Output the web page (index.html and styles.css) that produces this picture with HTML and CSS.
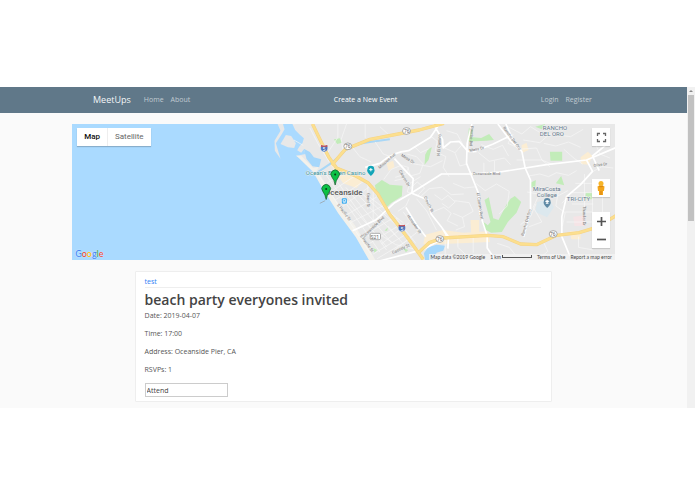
FILE: index.html
```html
<!DOCTYPE html>
<html lang="en">
<head>
<meta charset="utf-8">
<title>MeetUps</title>
<link rel="stylesheet" href="styles.css">
</head>
<body>
<div class="window">
  <div class="page">
    <header class="navbar">
      <nav class="nav-group">
        <a class="brand" href="#">MeetUps</a>
        <a class="nav-link" href="#">Home</a>
        <a class="nav-link" href="#">About</a>
      </nav>
      <a class="nav-link create" href="#">Create a New Event</a>
      <nav class="nav-group">
        <a class="nav-link" href="#">Login</a>
        <a class="nav-link" href="#">Register</a>
      </nav>
    </header>
    <main class="content">
      <section class="map" aria-label="Map of events">
        <svg class="map-canvas" viewBox="0 0 543 136" preserveAspectRatio="xMidYMid slice">
          <g transform="translate(188 -4) scale(.33333)">
            <path class="land" d="M48 0L62 32L44 62L45 92L62 116L48 70L66 42L74 28L66 0ZM92 0L106 30L120 44L132 55L128 69L118 80L112 91L124 98L132 88L137 102L118 106L108 107L132 122L170 162L187 190L215 238L258 300L300 360L350 425H1080V0Z"/>
            <path class="land" d="M62 72L78 45L94 48L108 70L103 84L84 82Z"/>
            <path class="sand" d="M110 107L125 108L160 144L178 140L172 150L190 180L230 244L285 316L350 425H330L288 352L235 280L186 202L160 156Z"/>
            <path class="river" d="M172 158Q195 142 213 130Q236 114 254 93Q280 72 330 66L390 58"/>
            <path class="water" d="M132 86L150 96L162 112L184 118L178 142L158 139L140 117ZM492 400L505 382L530 374L556 377L550 392L530 398L520 420H496Z"/>
            <path class="park" d="M222 58L240 55L247 68L232 72ZM345 196L366 180L390 194L428 197L426 229L394 249L382 260L352 230ZM505 87L516 82L506 120L494 134L496 104ZM627 25L640 30L632 51L664 54L688 42L702 60L680 62L642 64H624ZM674 240L687 232L700 295L716 300L742 250L752 236L765 228L784 246L770 278L744 306L726 336L694 338L674 328L666 302L684 316L692 306ZM870 95H907V122H872ZM888 190L904 168L913 196ZM812 188L828 180L826 204L812 202ZM978 218H996V238H976ZM374 332L384 322L382 332ZM430 384L445 390L438 397ZM826 20L856 12L846 28ZM340 384L352 390L344 398Z"/>
            <path class="campus" d="M832 246L868 238L882 262L862 292L826 276Z"/>
            <path class="zone" d="M212 134L248 150L282 160L306 186L290 204L250 190ZM380 130L400 122L404 141L386 152ZM496 344L550 330L610 338L684 334L690 366L546 372L490 372ZM632 300H658V338H634ZM785 76L800 68L806 90L788 98ZM962 112L984 95L998 108L986 134L964 132ZM930 334H962V358H934Z"/>
            <path class="clinic" d="M940 290L976 286V318H944Z"/>
            <g class="minor">
              <path d="M102 60L130 76M150 24L174 70L208 126M100 12L128 8M234 12V52L205 96M260 12L244 58L250 92M174 162L334 404M190 152L360 396M214 160L380 390M232 210L382 382M258 202L396 370M284 212L410 350M308 222L420 326M330 232L430 308M198 192L250 158M212 216L288 166M226 240L312 184M242 264L334 196M258 286L352 230M272 308L372 256M288 330L386 276M304 352L400 294M320 376L418 316M340 402L440 342M352 416L452 356M324 188V268M340 210V306"/>
              <path d="M316 54V12M278 82L300 110L334 126M346 66L370 102L404 114M360 20L384 42M372 178L394 148L424 136L446 142L438 162L406 172M404 182L432 176L450 190L482 170M440 102L470 110L490 132L480 160L452 168L444 142M462 78L482 98L508 86M452 130L512 140L548 122M450 190L442 216L474 226L494 204L472 186L450 206M512 48L532 64L526 94L558 110L550 142L568 170M560 32L592 42L608 72L586 98L554 84M586 100L600 138L622 132M580 190L614 204L650 200M484 228L508 206L546 202L574 224L612 222M524 224L546 240L564 226L586 246L566 264L546 250M518 276L552 262L574 280L562 302L594 318M584 242L628 248L640 274L608 292L580 280M608 292L614 320L588 330M648 190L676 212L710 192L748 214L742 258L718 282M664 74L700 88L728 76L746 108M656 98L688 124L734 114L752 134M672 160V128M704 160V122M760 42L744 70L776 84M770 120H846L870 140M774 88L830 84L846 120L880 134"/>
              <path d="M744 20L786 42L812 20L850 44M790 60L840 68L870 42L932 50L970 28M852 70L888 78L926 66L962 82M912 88L944 116L968 132M806 168L840 162L866 170L890 158L926 166L950 152M802 216L834 222L862 214L894 228L924 212M834 232L820 262L846 306L808 320M896 210L888 258L916 278L908 318M926 228L906 250M946 190H1010M936 218H1006M936 252H1000M916 276H996M920 306H1050M974 162V314M998 188V310M1028 198V360M1002 60L1020 102L1050 114M1000 154L1026 140L1060 144M782 314L812 290L828 252M712 370L748 382L766 404M850 364L864 394L838 416M956 350V382L1000 390M556 358V404M594 346V382L622 408M640 350V398M364 346L408 374L466 388M384 318L432 374M408 294L468 370M430 276L482 344M364 372L448 308M392 400L480 330M448 236L438 258L414 274M470 236L500 272L530 330"/>
            </g>
            <g class="major">
              <path d="M278 332L348 300L402 250L450 222L545 162H632L720 156L860 134L980 120L1070 82"/>
              <path d="M316 142L360 130Q400 95 446 92L512 52L540 10M404 116Q436 152 460 176L456 220L504 240L514 282L544 320L566 350L564 386M520 12L548 58L550 84L572 66L598 64L624 94H650M636 12L622 70L620 130L640 180L656 220L660 280L682 348V384L704 416M640 96L700 72L750 48M714 12L752 62L786 94L796 144L812 180V270L792 350M738 12L760 60M980 120L998 154L962 194L920 230L906 290L906 350L930 408M1044 70L998 108L1018 152M544 320L560 346L548 364M348 426L492 388L558 350M438 262L470 314L498 350"/>
            </g>
            <g class="freeway-edge">
              <path d="M158 12L184 66L207 112L230 144L284 166L324 188L354 222L389 282L444 354L490 418"/>
              <path d="M216 135L256 88L330 58L478 30L552 10"/>
              <path d="M478 396L508 368L550 354L620 350L684 346L730 350L782 372L830 374L890 346L958 338L1010 322L1070 286"/>
            </g>
            <g class="freeway">
              <path d="M158 12L184 66L207 112L230 144L284 166L324 188L354 222L389 282L444 354L490 418"/>
              <path d="M216 135L256 88L330 58L478 30L552 10"/>
              <path d="M478 396L508 368L550 354L620 350L684 346L730 350L782 372L830 374L890 346L958 338L1010 322L1070 286"/>
            </g>
            <g class="route">
              <ellipse cx="264" cy="79" rx="12" ry="10"/>
              <ellipse cx="440" cy="33" rx="12" ry="10"/>
              <ellipse cx="540" cy="357" rx="12" ry="10"/>
              <ellipse cx="880" cy="342" rx="12" ry="10"/>
              <rect x="331" y="340" width="31" height="19" rx="4"/>
            </g>
            <g id="interstate">
              <path d="M184 75Q193 79 202 75Q208 94 193 96Q178 94 184 75Z" fill="#4874bd" stroke="#fff" stroke-width="1"/>
              <path d="M184 75Q193 79 202 75L203 80H183Z" fill="#d34b48"/>
            </g>
            <use href="#interstate" x="233" y="239"/>
            <path d="M333 168Q318 154 323 147A10 10 0 0 1 343 147Q348 155 333 168Z" fill="#12a5b8"/>
            <path d="M328 149H338M333 144V154" stroke="#fff" stroke-width="3"/>
            <rect x="246" y="235" width="15" height="16" rx="3" fill="#38aaf0"/>
            <path d="M250 239H257V245H250ZM250 248H257" fill="none" stroke="#fff" stroke-width="2"/>
            <path d="M862 264Q848 252 852 244A10 10 0 0 1 872 244Q876 252 862 264Z" fill="#608aa5"/>
            <path d="M855 244L862 240L869 244L862 248ZM858 248V251H866V248" fill="#fff"/>
            <path d="M180 250L196 242" stroke="#999" stroke-width="2"/>
          </g>
          <g class="route-label">
            <text x="276" y="24">76</text>
            <text x="335" y="9">76</text>
            <text x="368" y="117">76</text>
            <text x="481" y="112">76</text>
            <text x="303" y="115">S21</text>
            <text class="shield-label" x="252" y="27">5</text>
            <text class="shield-label" x="330" y="107">5</text>
          </g>
          <g class="place">
            <text class="teal" x="234" y="51">Ocean's Eleven Casino</text>
            <text class="city" x="253" y="71">Oceanside</text>
            <text class="district" x="471" y="6">RANCHO</text>
            <text class="district" x="468" y="12">DEL ORO</text>
            <text class="district" x="495" y="77">TRI-CITY</text>
            <text class="college" x="475" y="67" text-anchor="middle">MiraCosta</text>
            <text class="college" x="475" y="73" text-anchor="middle">College</text>
          </g>
          <g class="street">
            <text x="401" y="51">Oceanside Blvd</text>
            <text transform="translate(265 81) rotate(53)">S Pacific St</text>
            <text transform="translate(288 112) rotate(54)">S Pacific St</text>
            <text transform="translate(295 69) rotate(90)">Grant St</text>
            <text transform="translate(293 113) rotate(-44)">Oceanside Blvd</text>
            <text transform="translate(308 45) rotate(-42)">Mission Ave</text>
            <text transform="translate(329 32) rotate(32)">Mesa Dr</text>
            <text transform="translate(327 47) rotate(60)">Canyon Dr</text>
            <text transform="translate(368 32) rotate(-87)">N El Camino</text>
            <text transform="translate(399 2) rotate(94)">Rancho Del</text>
            <text transform="translate(398 28) rotate(-12)">Mesa Dr</text>
            <text transform="translate(405 69) rotate(82)">El Camino Real</text>
            <text transform="translate(352 73) rotate(65)">Crouch St</text>
            <text transform="translate(335 92) rotate(55)">Hunsaker St</text>
            <text transform="translate(321 130) rotate(-25)">Cassidy St</text>
            <text transform="translate(431 4) rotate(54)">Rancho Del Oro</text>
            <text transform="translate(452 112) rotate(-74)">Rancho Del Oro</text>
            <text transform="translate(511 82) rotate(90)">Thunder Dr</text>
            <text transform="translate(522 43) rotate(-8)">Olive Dr</text>
          </g>
          <g class="marker">
            <path id="pin" d="M254.300 75.500Q253.500 70.500 251 67.500A4.300 4.300 0 1 1 257.600 67.500Q255.200 70.500 254.300 75.500Z"/>
            <use href="#pin" x="9" y="-14.500"/>
            <circle cx="254.300" cy="65" r="1"/>
            <circle cx="263.300" cy="50.500" r="1"/>
          </g>
        </svg>
        <div class="map-types">
          <button class="type active" type="button">Map</button>
          <button class="type" type="button">Satellite</button>
        </div>
        <div class="map-tools">
          <button class="tool" type="button" aria-label="Fullscreen">
            <svg class="tool-icon" viewBox="0 0 18 18"><path d="M5.500 8V5.500H8M11 5.500H13.500V8M13.500 11V13.500H11M8 13.500H5.500V11" fill="none" stroke="#666" stroke-width="1.300"/></svg>
          </button>
          <button class="tool pegman" type="button" aria-label="Street View">
            <svg class="tool-icon" viewBox="0 0 18 18"><path d="M5.500 7.500Q9 5 12.500 7.500L12 12H11V16H7V12H6Z" fill="#f3a51c"/><circle cx="9" cy="4.500" r="2.500" fill="#f7b529"/><path d="M7 7.200Q9 8.500 11 7.200M9 12V16" fill="none" stroke="#d17b10" stroke-width=".8"/></svg>
          </button>
          <div class="zoom">
            <button class="tool" type="button" aria-label="Zoom in">
              <svg class="tool-icon" viewBox="0 0 18 18"><path d="M5 9.500H14M9.500 5V14" stroke="#555" stroke-width="1.700"/></svg>
            </button>
            <button class="tool" type="button" aria-label="Zoom out">
              <svg class="tool-icon" viewBox="0 0 18 18"><path d="M5 9.500H14" stroke="#555" stroke-width="1.700"/></svg>
            </button>
          </div>
        </div>
        <a class="google" href="#"><span class="blue">G</span><span class="red">o</span><span class="yellow">o</span><span class="blue">g</span><span class="green">l</span><span class="red">e</span></a>
        <div class="map-footer">
          <span>Map data ©2019 Google</span>
          <span class="scale">1 km <span class="scale-bar"></span></span>
          <a href="#">Terms of Use</a>
          <a href="#">Report a map error</a>
        </div>
      </section>
      <article class="card">
        <div class="card-head"><a class="author" href="#">test</a></div>
        <h1 class="title">beach party everyones invited</h1>
        <p class="detail">Date: 2019-04-07</p>
        <p class="detail">Time: 17:00</p>
        <p class="detail">Address: Oceanside Pier, CA</p>
        <p class="detail">RSVPs: 1</p>
        <input class="attend" type="text" value="Attend" aria-label="Attend">
      </article>
    </main>
  </div>
  <div class="scrollbar" aria-hidden="true">
    <svg class="scroll-arrow" viewBox="0 0 8 8"><path d="M2 5L4 3L6 5Z" fill="#888"/></svg>
    <div class="scroll-thumb"></div>
  </div>
</div>
</body>
</html>
```
FILE: styles.css
```css
* {
  box-sizing: border-box;
}

body {
  margin: 0;
  padding-top: 87px;
  background: #fff;
  color: #555;
  font-family: "Open Sans", "Noto Sans", sans-serif;
  font-size: 7px;
  line-height: 10px;
}

a {
  color: inherit;
  text-decoration: none;
}

button {
  border: 0;
  padding: 0;
  background: #fff;
  font: inherit;
}

.window {
  display: flex;
  background: #fafafa;
}

.page {
  flex: 1;
  min-width: 0;
  padding-bottom: 6px;
}

.navbar {
  display: flex;
  align-items: center;
  justify-content: space-between;
  height: 26px;
  padding: 0 95px 0 93px;
  background: #607889;
  color: #fff;
}

.nav-group {
  display: flex;
  align-items: center;
  gap: 7px;
}

.brand {
  margin-right: 6px;
  color: #f3f6f8;
  font-size: 9px;
}

.nav-link {
  color: #c1cbd2;
}

.create {
  color: #fff;
}

.content {
  width: 79%;
  margin: 11px auto 0;
}

.map {
  position: relative;
  height: 136px;
  overflow: hidden;
  background: #aadaff;
  font-family: Roboto, sans-serif;
}

.map-canvas {
  display: block;
  width: 100%;
  height: 100%;
}

.land { fill: #e8e8e8; }
.sand { fill: #f3f1eb; }
.water { fill: #a6d7fb; }
.park { fill: #c2ecb9; }
.zone { fill: #fbedd3; }
.campus { fill: #dce8ee; }
.clinic { fill: #f5e4e6; }

.river {
  fill: none;
  stroke: #a9d7f6;
  stroke-width: 6;
}

.minor {
  fill: none;
  stroke: #f7f7f7;
  stroke-width: 2;
  stroke-linejoin: round;
}

.major {
  fill: none;
  stroke: #fff;
  stroke-width: 5;
  stroke-linejoin: round;
}

.freeway-edge {
  fill: none;
  stroke: #f5d386;
  stroke-width: 10;
  stroke-linejoin: round;
}

.freeway {
  fill: none;
  stroke: #fcdf8e;
  stroke-width: 7;
  stroke-linejoin: round;
}

.route {
  fill: #fff;
  stroke: #888;
  stroke-width: 2;
}

.route-label {
  fill: #666;
  font-size: 5px;
  text-anchor: middle;
}

.shield-label { fill: #fff; }

.place {
  fill: #62788b;
  font-size: 6px;
  stroke: #f2f2f2;
  stroke-width: 1px;
  paint-order: stroke;
}

.teal { fill: #3a929b; }

.city {
  fill: #555;
  font-size: 8px;
  font-weight: 500;
}

.street {
  fill: #777;
  font-size: 4px;
}

.marker {
  fill: #0bc145;
  stroke: #17582a;
  stroke-width: .7;
}

.marker circle {
  fill: #093c15;
  stroke: none;
}

.map-types {
  position: absolute;
  top: 4px;
  left: 5px;
  display: flex;
  box-shadow: 0 1px 1px #0003;
}

.type {
  height: 18px;
  padding: 0 7px;
  color: #666;
  font-size: 8px;
}

.active {
  border-right: 1px solid #eee;
  color: #111;
  font-weight: 500;
}

.map-tools {
  position: absolute;
  top: 4px;
  right: 5px;
  display: flex;
  flex-direction: column;
}

.tool {
  width: 18px;
  height: 18px;
  box-shadow: 0 1px 1px #0002;
}

.tool-icon {
  display: block;
  width: 18px;
  height: 18px;
}

.pegman {
  margin: 33px 0 15px;
}

.zoom {
  display: flex;
  flex-direction: column;
}

.google {
  position: absolute;
  bottom: 0;
  left: 3px;
  font-family: Lato, sans-serif;
  font-size: 9px;
  font-weight: 500;
  line-height: 12px;
  text-shadow: 0 0 1px #fff;
}

.blue { color: #4285f4; }
.red { color: #ea4335; }
.yellow { color: #fbbc05; }
.green { color: #34a853; }

.map-footer {
  position: absolute;
  right: 0;
  bottom: 0;
  display: flex;
  gap: 5px;
  height: 6px;
  padding: 0 3px 0 1px;
  background: #f5f5f5b3;
  color: #444;
  font-family: Lato, sans-serif;
  font-size: 5px;
  line-height: 6px;
}

.scale {
  display: flex;
  gap: 1px;
}

.scale-bar {
  width: 30px;
  height: 3px;
  margin-top: 1px;
  border: 1px solid #555;
  border-top: 0;
}

.card {
  width: 77%;
  margin: 11px auto 0;
  padding: 5px 10px 4px 9px;
  border: 1px solid #eee;
  border-radius: 1px;
  background: #fff;
}

.card-head {
  margin-bottom: 2px;
  border-bottom: 1px solid #eee;
}

.author { color: #2f80f5; }

.title {
  margin: 0 0 1px;
  color: #444;
  font-size: 14px;
  font-weight: 600;
  line-height: 20px;
}

.detail {
  margin: 0 0 8px;
}

.attend {
  display: block;
  width: 83px;
  height: 14px;
  padding: 0 1px;
  border: 1px solid #ccc;
  border-radius: 0;
  background: #fff;
  color: #444;
  font: inherit;
}

.scrollbar {
  width: 8px;
  background: #f1f1f1;
}

.scroll-arrow {
  display: block;
  width: 8px;
  height: 8px;
}

.scroll-thumb {
  height: 126px;
  margin: 0 1px;
  background: #c1c1c1;
}
```
